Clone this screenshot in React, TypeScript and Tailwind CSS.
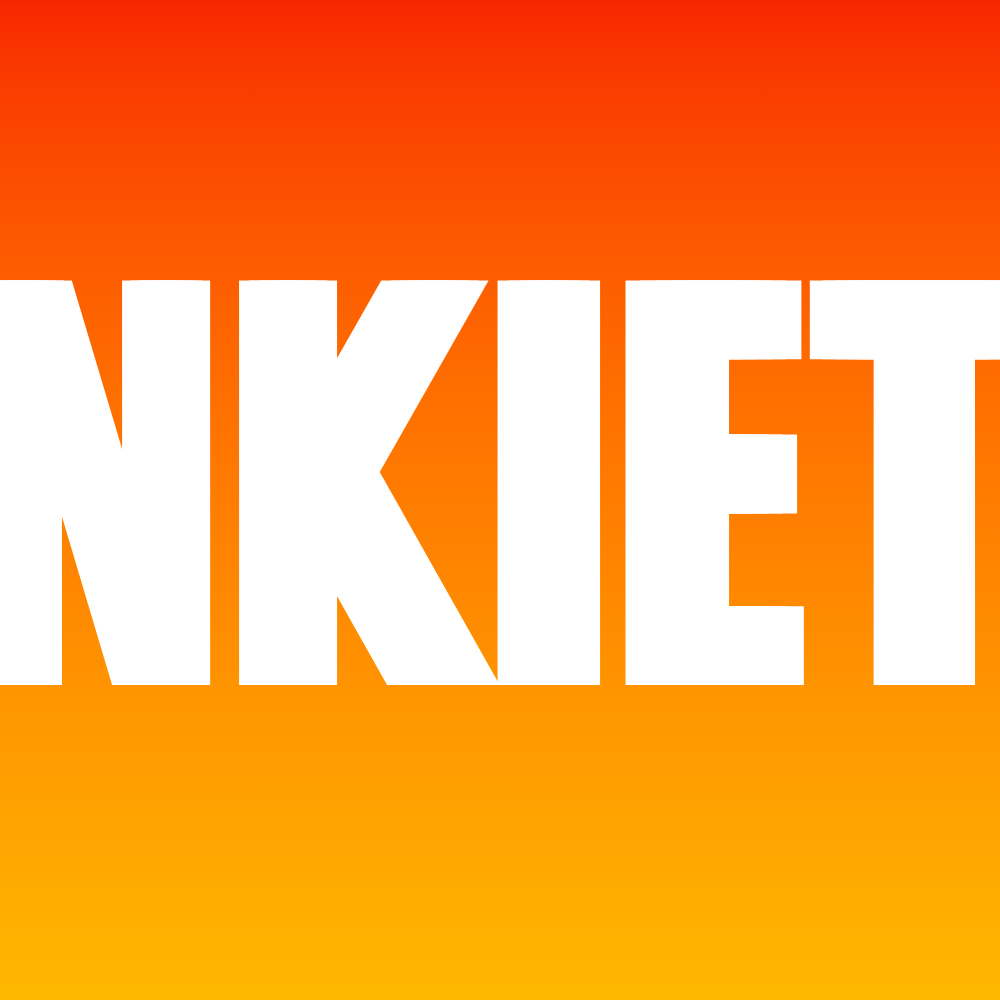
import React from 'react';

// each glyph: box width (visible ink), left gap, and a horizontal-only thickening
const letters = [
    { ch: 'A', box: 'w-[240px] ml-0', glyph: 'scale-x-[0.625] [text-shadow:16px_0_0_white,-16px_0_0_white,32px_0_0_white,-32px_0_0_white]' },
    { ch: 'N', box: 'w-[236px] ml-[10px]', glyph: 'scale-x-[0.625] [text-shadow:13px_0_0_white,-13px_0_0_white,26px_0_0_white,-26px_0_0_white]' },
    { ch: 'K', box: 'w-[253px] ml-[14px]', glyph: 'scale-x-[0.62] [text-shadow:16px_0_0_white,-16px_0_0_white,32px_0_0_white,-32px_0_0_white]' },
    { ch: 'I', box: 'w-[103px] ml-[20px]', glyph: 'scale-x-[0.625] [text-shadow:17.5px_0_0_white,-17.5px_0_0_white,35px_0_0_white,-35px_0_0_white]' },
    { ch: 'E', box: 'w-[181px] ml-[22px]', glyph: 'scale-x-[0.454] [text-shadow:34px_0_0_white,-34px_0_0_white,67px_0_0_white,-67px_0_0_white]' },
    { ch: 'T', box: 'w-[228px] ml-[7px]', glyph: 'scale-x-[0.528] [text-shadow:25px_0_0_white,-25px_0_0_white,49px_0_0_white,-49px_0_0_white]' },
    { ch: 'A', box: 'w-[228px] ml-[10px]', glyph: 'scale-x-[0.625] [text-shadow:16px_0_0_white,-16px_0_0_white,32px_0_0_white,-32px_0_0_white]' },
];

const App: React.FC = () => {
    return (
        <div className="w-[1000px] h-[1000px] overflow-hidden bg-gradient-to-b from-[#f82600] to-[#ffb800] flex items-center justify-center">
            <h1
                aria-label="ANKIETA"
                className="flex shrink-0 -translate-y-[7px] text-white font-bold leading-none text-[555px] font-['DejaVu_Sans_Condensed',sans-serif]"
            >
                {letters.map((l, i) => (
                    <span key={i} className={`${l.box} shrink-0 flex justify-center`}>
                        <span className={`${l.glyph} inline-block`}>{l.ch}</span>
                    </span>
                ))}
            </h1>
        </div>
    );
};

export default App;
